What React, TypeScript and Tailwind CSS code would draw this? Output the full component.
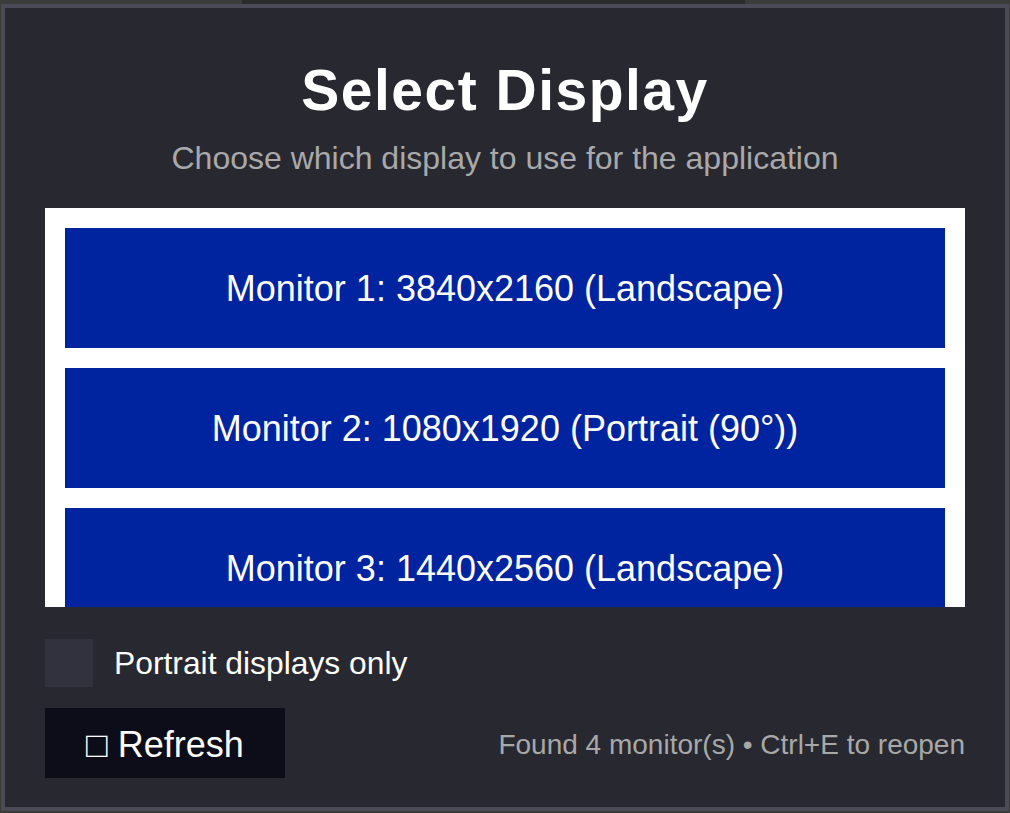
import { useState } from "react";

const MONITORS = [
  "Monitor 1: 3840x2160 (Landscape)",
  "Monitor 2: 1080x1920 (Portrait (90°))",
  "Monitor 3: 1440x2560 (Landscape)",
  "Monitor 4: 1920x1080 (Landscape)",
];

export default function App() {
  const [portraitOnly, setPortraitOnly] = useState(false);

  return (
    <div
      className="w-[1010px] h-[813px] bg-[#3b3b39] overflow-hidden"
      style={{ fontFamily: "'Liberation Sans', Arial, sans-serif" }}
    >
      {/* window strip behind the dialog */}
      <div className="h-[4px] flex">
        <div className="ml-[242px] w-[503px] bg-[#2b2b2b]" />
      </div>

      <div className="ml-[1px] w-[1008px] h-[807px] border-4 border-[#4b4b57] bg-[#272830] flex flex-col px-10 pt-[52px]">
        <h1 className="text-center text-white font-bold text-[57px] leading-[60px] tracking-[1.5px]">
          Select Display
        </h1>
        <p className="mt-[18px] text-center text-[#a9a9a9] text-[32px] leading-[40px]">
          Choose which display to use for the application
        </p>

        <div className="mt-[30px] h-[399px] bg-white p-5 overflow-hidden flex flex-col gap-5">
          {MONITORS.map((m) => (
            <button
              key={m}
              className="h-[120px] shrink-0 bg-[#0023a0] text-white text-[36px] flex items-center justify-center pt-[1px]"
            >
              {m}
            </button>
          ))}
        </div>

        <label className="mt-[32px] flex items-center gap-[21px] h-[48px] cursor-pointer">
          <span
            className="w-[48px] h-[48px] bg-[#32323f]"
            onClick={() => setPortraitOnly(!portraitOnly)}
          />
          <span className="text-white text-[31.8px] leading-[40px]">Portrait displays only</span>
        </label>

        <div className="mt-[21px] flex items-center justify-between">
          <button className="w-[240px] h-[70px] bg-[#0d0d1a] text-white text-[36px] leading-[44px] flex items-center justify-center pt-[3px]">
            □ Refresh
          </button>
          <span className="text-[#a8a8a8] text-[28px] leading-[36px] pt-[3px]">
            Found 4 monitor(s) • Ctrl+E to reopen
          </span>
        </div>
      </div>
    </div>
  );
}
